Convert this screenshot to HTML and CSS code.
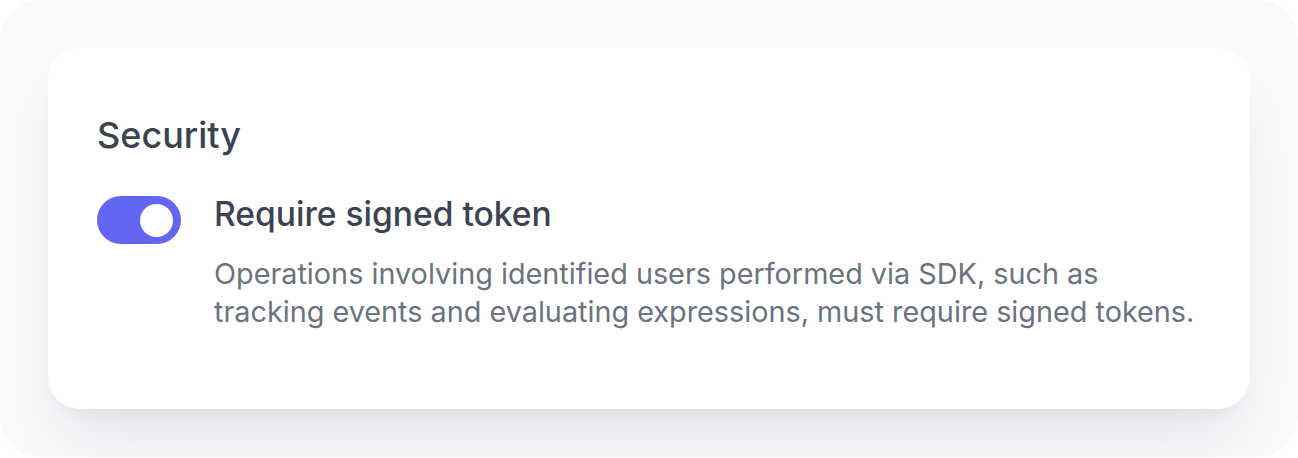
FILE: index.html
```html
<!DOCTYPE html>
<html>
<head>
<meta charset="utf-8">
<link rel="stylesheet" href="styles.css">
</head>
<body>
<div class="frame">
  <section class="card">
    <h2 class="heading">Security</h2>
    <div class="setting">
      <span class="toggle" role="switch" aria-checked="true"><span class="knob"></span></span>
      <div class="setting-text">
        <div class="setting-title">Require signed token</div>
        <p class="setting-desc">Operations involving identified users performed via SDK, such as tracking events and evaluating expressions, must require signed tokens.</p>
      </div>
    </div>
  </section>
</div>
</body>
</html>
```
FILE: styles.css
```css
html, body { margin: 0; padding: 0; background: #ffffff; }
body { font-family: Inter, "Noto Sans", sans-serif; }
.frame {
  width: 1298px;
  height: 457px;
  box-sizing: border-box;
  background: #f8f9fb;
  border-radius: 40px;
  padding: 48px 48px 0 48px;
  overflow: hidden;
}
.card {
  background: #ffffff;
  border-radius: 32px;
  box-sizing: border-box;
  height: 361px;
  padding: 66px 50px 0 49px;
  box-shadow: 0 40px 60px -20px rgba(17, 24, 39, 0.10), 0 10px 20px -10px rgba(17, 24, 39, 0.06);
}
.heading {
  margin: 0;
  font-size: 36px;
  font-weight: 500;
  line-height: 43px;
  color: #3b4252;
}
.setting {
  display: flex;
  gap: 33px;
  margin-top: 39px;
}
.toggle {
  flex: none;
  width: 84px;
  height: 48px;
  border-radius: 24px;
  background: #6366f1;
  display: flex;
  align-items: center;
  justify-content: flex-end;
  padding: 0 8px;
  box-sizing: border-box;
}
.knob { width: 33px; height: 33px; border-radius: 50%; background: #fff; }
.setting-text { width: 986px; }
.setting-title {
  font-size: 33.6px;
  font-weight: 500;
  line-height: 36px;
  color: #3b4252;
}
.setting-desc {
  margin: 23px 0 0 0;
  font-size: 28.8px;
  line-height: 38.4px;
  color: #6b7280;
}
```
